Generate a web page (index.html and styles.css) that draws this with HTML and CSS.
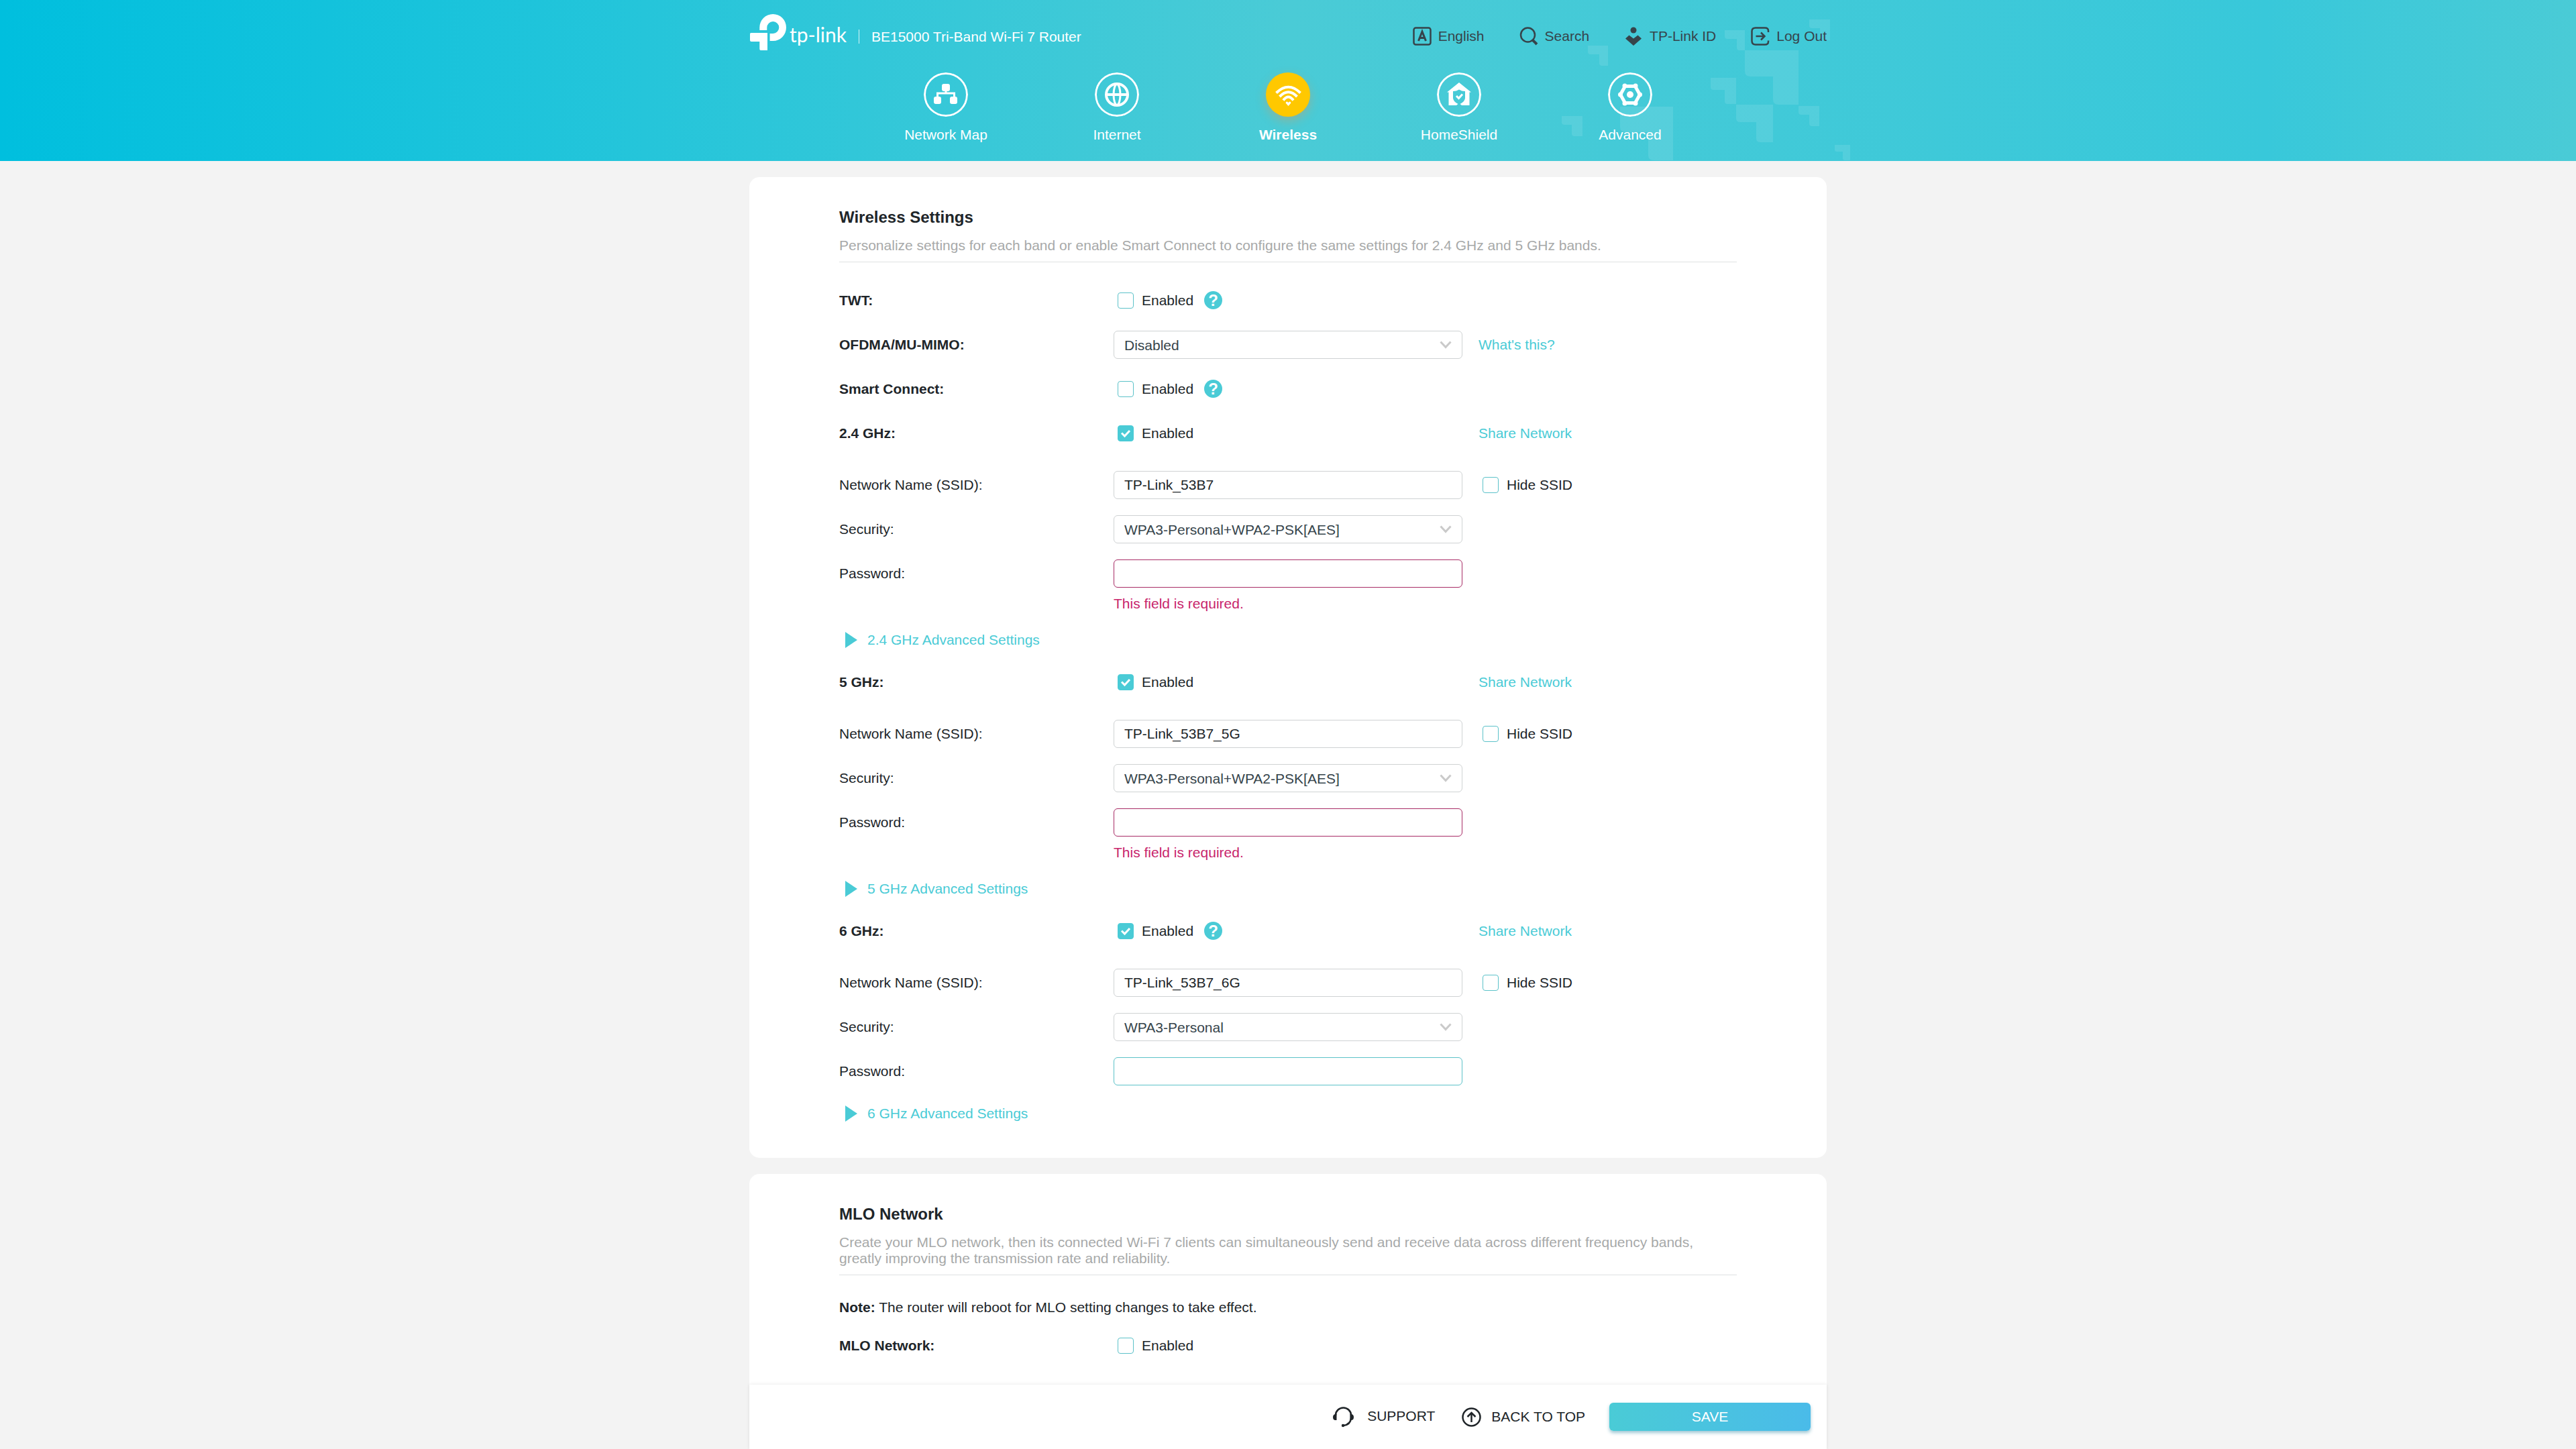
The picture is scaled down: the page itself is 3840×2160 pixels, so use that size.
FILE: index.html
```html
<!DOCTYPE html>
<html lang="en">
<head>
<meta charset="utf-8">
<meta name="viewport" content="width=device-width, initial-scale=1">
<title>BE15000 Tri-Band Wi-Fi 7 Router</title>
<link rel="stylesheet" href="styles.css">
</head>
<body>
<header class="header">
  <div class="container header-inner">
    <svg class="pattern" viewBox="0 0 430 240" aria-hidden="true">
      <path d="M39 68h30v30h-9q-4 0-4-4V81H43q-4 0-4-4z"/>
      <path d="M0 173h31v30h-12q-4 0-4-4v-13H4q-4 0-4-4z"/>
      <path d="M87 159h79v80h-29q-8 0-8-8v-34H95q-8 0-8-8z"/>
      <path d="M222 116h38v39h-13q-4 0-4-4v-17h-17q-4 0-4-4z"/>
      <path d="M243 45h30v30h-8q-4 0-4-4V58h-14q-4 0-4-4z"/>
      <path d="M273 75h80v81h-30q-8 0-8-8v-34h-34q-8 0-8-8z"/>
      <path d="M260 156h55v56h-19q-6 0-6-6v-24h-24q-6 0-6-6z"/>
      <path d="M353 158h31v30h-11q-4 0-4-4v-13h-12q-4 0-4-4z"/>
      <path d="M369 29h31v31h-11q-4 0-4-4V42h-12q-4 0-4-4z"/>
      <path d="M407 216h23v23h-8q-3 0-3-3v-10h-9q-3 0-3-3z"/>
    </svg>
    <div class="topbar">
      <div class="brand">
        <svg class="brand-mark" viewBox="0 0 54 54" aria-hidden="true">
          <path d="M14.300 24V20A20 20 0 0 1 34.300 0 19.700 20 0 0 1 54 20 19.700 20 0 0 1 34.300 40H29.600V29H34.300A9 9 0 1 0 25.300 20V24Z"/>
          <path d="M1.500 28H26V54H16Q14.300 54 14.300 52V41H2Q0 41 0 39V29.500Q0 28 1.500 28Z"/>
        </svg>
        <span class="brand-name">tp-link</span>
        <span class="brand-rule"></span>
        <span class="model">BE15000 Tri-Band Wi-Fi 7 Router</span>
      </div>
      <nav class="tools" aria-label="Account">
        <a class="tool" href="#language">
          <svg viewBox="0 0 28 28" aria-hidden="true"><rect x="1.500" y="1.500" width="25" height="25" rx="3" class="line"/><path d="M8.500 21 14 7 19.500 21M10 16.500H18" class="line mid"/></svg>
          English
        </a>
        <a class="tool" href="#search">
          <svg viewBox="0 0 28 28" aria-hidden="true"><circle cx="12.500" cy="12" r="10.500" class="line"/><path d="M19.500 19.500 26 26" class="line thick"/></svg>
          Search
        </a>
        <a class="tool" href="#id">
          <svg viewBox="0 0 28 28" aria-hidden="true"><circle cx="14" cy="5" r="4.500"/><path d="M7.500 12.500 14 17.500 20.500 12.500 26 17.500 14 28 2 17.500Z"/></svg>
          TP-Link ID
        </a>
        <a class="tool" href="#logout">
          <svg viewBox="0 0 28 28" aria-hidden="true"><path d="M26 8V6Q26 1.500 21 1.500H7Q1.500 1.500 1.500 6.500V21Q1.500 26.500 7 26.500H21Q26 26.500 26 22V20.500M7.500 14H20M15 8.500 20.500 14 15 19.500" class="line"/></svg>
          Log Out
        </a>
      </nav>
    </div>
    <nav class="tabs" aria-label="Main">
      <a class="tab" href="#map">
        <svg viewBox="0 0 66 66" aria-hidden="true"><circle cx="33" cy="33" r="31.500" class="ring"/><rect x="27" y="17" width="12" height="11" rx="3"/><rect x="15" y="36" width="11" height="11" rx="3"/><rect x="39" y="36" width="11" height="11" rx="3"/><path d="M33 27V31.500M20.500 38V31H45.500V38" class="ring"/></svg>
        <span>Network Map</span>
      </a>
      <a class="tab" href="#internet">
        <svg viewBox="0 0 66 66" aria-hidden="true"><circle cx="33" cy="33" r="31.500" class="ring"/><circle cx="33" cy="33" r="16" class="ring wide"/><ellipse cx="33" cy="33" rx="5" ry="15.500" class="ring"/><path d="M17 33H49" class="ring wide"/></svg>
        <span>Internet</span>
      </a>
      <a class="tab tab-active" href="#wireless" aria-current="page">
        <svg viewBox="0 0 66 66" aria-hidden="true"><path d="M15.500 30.500Q33.500 13 51.500 30.500M20.500 36Q33.500 22.500 46.500 36M26 41.500Q33.500 31.500 41 41.500" class="ring wide"/><path d="M33.500 50 29.500 45.500Q30.500 42 33.500 45 36.500 42 37.500 45.500Z"/></svg>
        <span>Wireless</span>
      </a>
      <a class="tab" href="#homeshield">
        <svg viewBox="0 0 66 66" aria-hidden="true"><circle cx="33" cy="33" r="31.500" class="ring"/><path d="M33 15 51 29.500H48.500V49H37L34.500 47Q42 43 42 38V28Q37 28 33 25.500 29 28 24 28V38Q24 43 31.500 47L29 49H17.500V29.500H15Z"/><path d="M29 35 32.500 38.500 38 32.500" class="ring"/></svg>
        <span>HomeShield</span>
      </a>
      <a class="tab" href="#advanced">
        <svg viewBox="0 0 66 66" aria-hidden="true"><circle cx="33" cy="33" r="31.500" class="ring"/><path d="M25.500 20.500H40.500L47.500 33 40.500 45.500H25.500L18.500 33Z" class="ring gear"/><g><circle cx="25" cy="20" r="3.500"/><circle cx="41" cy="20" r="3.500"/><circle cx="47.500" cy="33" r="3.500"/><circle cx="41" cy="46" r="3.500"/><circle cx="25" cy="46" r="3.500"/><circle cx="18.500" cy="33" r="3.500"/><circle cx="33" cy="33" r="5"/></g></svg>
        <span>Advanced</span>
      </a>
    </nav>
  </div>
</header>

<main class="container main">
  <section class="card">
    <h1 class="card-title">Wireless Settings</h1>
    <p class="card-desc">Personalize settings for each band or enable Smart Connect to configure the same settings for 2.4 GHz and 5 GHz bands.</p>
    <form class="form">
      <div class="group">
        <div class="row">
          <span class="label strong">TWT:</span>
          <div class="field"><label class="check"><input type="checkbox">Enabled</label><button type="button" class="help" aria-label="Help">?</button></div>
        </div>
        <div class="row">
          <label class="label strong" for="ofdma">OFDMA/MU-MIMO:</label>
          <div class="select"><select id="ofdma"><option>Disabled</option></select><svg viewBox="0 0 18 12" aria-hidden="true"><path d="M1.500 1.500 9 9.500 16.500 1.500"/></svg></div>
          <a class="link" href="#help">What's this?</a>
        </div>
        <div class="row">
          <span class="label strong">Smart Connect:</span>
          <div class="field"><label class="check"><input type="checkbox">Enabled</label><button type="button" class="help" aria-label="Help">?</button></div>
        </div>
        <div class="row">
          <span class="label strong">2.4 GHz:</span>
          <div class="field"><label class="check"><input type="checkbox" checked>Enabled</label></div>
          <a class="link" href="#share24">Share Network</a>
        </div>
      </div>
      <div class="group group-band">
        <div class="row">
          <label class="label" for="ssid24">Network Name (SSID):</label>
          <input class="input" id="ssid24" type="text" value="TP-Link_53B7">
          <label class="check check-side"><input type="checkbox">Hide SSID</label>
        </div>
        <div class="row">
          <label class="label" for="sec24">Security:</label>
          <div class="select"><select id="sec24"><option>WPA3-Personal+WPA2-PSK[AES]</option></select><svg viewBox="0 0 18 12" aria-hidden="true"><path d="M1.500 1.500 9 9.500 16.500 1.500"/></svg></div>
        </div>
        <div class="row">
          <label class="label" for="pw24">Password:</label>
          <input class="input input-error" id="pw24" type="password" aria-describedby="err24">
          <p class="error" id="err24">This field is required.</p>
        </div>
      </div>
      <button type="button" class="more"><svg viewBox="0 0 18 24" aria-hidden="true"><path d="M0 0 18 12 0 24Z"/></svg>2.4 GHz Advanced Settings</button>

      <div class="row">
        <span class="label strong">5 GHz:</span>
        <div class="field"><label class="check"><input type="checkbox" checked>Enabled</label></div>
        <a class="link" href="#share5">Share Network</a>
      </div>
      <div class="group group-band">
        <div class="row">
          <label class="label" for="ssid5">Network Name (SSID):</label>
          <input class="input" id="ssid5" type="text" value="TP-Link_53B7_5G">
          <label class="check check-side"><input type="checkbox">Hide SSID</label>
        </div>
        <div class="row">
          <label class="label" for="sec5">Security:</label>
          <div class="select"><select id="sec5"><option>WPA3-Personal+WPA2-PSK[AES]</option></select><svg viewBox="0 0 18 12" aria-hidden="true"><path d="M1.500 1.500 9 9.500 16.500 1.500"/></svg></div>
        </div>
        <div class="row">
          <label class="label" for="pw5">Password:</label>
          <input class="input input-error" id="pw5" type="password" aria-describedby="err5">
          <p class="error" id="err5">This field is required.</p>
        </div>
      </div>
      <button type="button" class="more"><svg viewBox="0 0 18 24" aria-hidden="true"><path d="M0 0 18 12 0 24Z"/></svg>5 GHz Advanced Settings</button>

      <div class="row">
        <span class="label strong">6 GHz:</span>
        <div class="field"><label class="check"><input type="checkbox" checked>Enabled</label><button type="button" class="help" aria-label="Help">?</button></div>
        <a class="link" href="#share6">Share Network</a>
      </div>
      <div class="group group-band">
        <div class="row">
          <label class="label" for="ssid6">Network Name (SSID):</label>
          <input class="input" id="ssid6" type="text" value="TP-Link_53B7_6G">
          <label class="check check-side"><input type="checkbox">Hide SSID</label>
        </div>
        <div class="row">
          <label class="label" for="sec6">Security:</label>
          <div class="select"><select id="sec6"><option>WPA3-Personal</option></select><svg viewBox="0 0 18 12" aria-hidden="true"><path d="M1.500 1.500 9 9.500 16.500 1.500"/></svg></div>
        </div>
        <div class="row">
          <label class="label" for="pw6">Password:</label>
          <input class="input input-active" id="pw6" type="password">
        </div>
      </div>
      <button type="button" class="more"><svg viewBox="0 0 18 24" aria-hidden="true"><path d="M0 0 18 12 0 24Z"/></svg>6 GHz Advanced Settings</button>
    </form>
  </section>

  <section class="card card-last">
    <h2 class="card-title">MLO Network</h2>
    <p class="card-desc">Create your MLO network, then its connected Wi-Fi 7 clients can simultaneously send and receive data across different frequency bands, greatly improving the transmission rate and reliability.</p>
    <form class="form">
      <p class="note"><strong>Note:</strong> The router will reboot for MLO setting changes to take effect.</p>
      <div class="row">
        <span class="label strong">MLO Network:</span>
        <div class="field"><label class="check"><input type="checkbox">Enabled</label></div>
      </div>
    </form>
  </section>

  <footer class="footer">
    <a class="foot-link foot-support" href="#support">
      <svg viewBox="0 0 31 31" aria-hidden="true"><path d="M4 13V12.500A11.500 11 0 0 1 27 12.500V17Q26 26.500 16 28" class="line"/><path d="M5.500 11V20H3Q0 19.500 0 15.500T3.500 11ZM25.500 11V20H28Q31 19.500 31 15.500T27.500 11Z"/><circle cx="15" cy="28" r="2.200"/></svg>
      <span>SUPPORT</span>
    </a>
    <a class="foot-link" href="#top">
      <svg viewBox="0 0 29 29" aria-hidden="true"><circle cx="14.500" cy="14.500" r="13" class="line"/><path d="M14.500 22V8.500M8.500 14 14.500 8 20.500 14" class="line"/></svg>
      BACK TO TOP
    </a>
    <button type="button" class="save">SAVE</button>
  </footer>
</main>
</body>
</html>
```

FILE: styles.css
```css
:root {
  --teal: #4acbd6;
  --teal-line: #5cc2c9;
  --ink: #202529;
  --slate: #36444b;
}

* {
  box-sizing: border-box;
}

body {
  margin: 0;
  min-height: 100vh;
  display: flex;
  flex-direction: column;
  background: #f3f3f3;
  color: var(--ink);
  font: 21px/24px "Liberation Sans", Arial, sans-serif;
}

h1, h2, p {
  margin: 0;
}

a {
  color: inherit;
  text-decoration: none;
}

button, input, select {
  margin: 0;
  font: inherit;
  color: inherit;
}

button {
  padding: 0;
  border: 0;
  background: none;
  cursor: pointer;
}

svg {
  display: block;
  flex: none;
}

.container {
  width: 100%;
  max-width: 1606px;
  margin: 0 auto;
}

/* Header */
.header {
  background: linear-gradient(90deg, #00bfde 0%, #4acbd6 50%, #38c8da 88%, #4acbd6 100%);
  color: #fff;
}

.header-inner {
  position: relative;
  padding: 21px 0 27px;
}

.pattern {
  position: absolute;
  top: 0;
  right: -35px;
  width: 430px;
  height: 240px;
  fill: rgba(255, 255, 255, 0.1);
}

.topbar {
  position: relative;
  display: flex;
  justify-content: space-between;
  align-items: flex-start;
}

.brand {
  display: flex;
  align-items: flex-start;
}

.brand-mark {
  width: 54px;
  height: 54px;
  margin-left: 1px;
  fill: #fff;
}

.brand-name {
  padding: 12px 0 0 5px;
  font: 30px/36px Lato, "Open Sans", sans-serif;
}

.brand-rule {
  width: 1px;
  height: 21px;
  margin: 23px 18px 0;
  background: rgba(255, 255, 255, 0.8);
}

.model {
  padding-top: 22px;
}

.tools {
  display: flex;
  gap: 52px;
  padding-top: 19px;
  color: var(--slate);
}

.tool {
  display: flex;
  align-items: center;
  gap: 10px;
  height: 28px;
}

.tool svg {
  width: 28px;
  height: 28px;
  fill: currentColor;
}

.line {
  fill: none;
  stroke: currentColor;
  stroke-width: 2.5;
}

.mid {
  stroke-width: 3;
}

.thick {
  stroke-width: 4;
}

.tabs {
  position: relative;
  display: flex;
  justify-content: center;
  margin-top: 33px;
}

.tab {
  width: 255px;
  display: flex;
  flex-direction: column;
  align-items: center;
  gap: 15px;
}

.tab svg {
  width: 66px;
  height: 66px;
  border-radius: 50%;
  fill: #fff;
}

.tab .ring {
  fill: none;
  stroke: #fff;
  stroke-width: 3;
}

.tab .wide {
  stroke-width: 4;
}

.tab .gear {
  stroke-width: 5;
}

.tab-active {
  font-weight: bold;
}

.tab-active svg {
  background: #ffc800;
  box-shadow: 0 6px 15px rgba(255, 140, 60, 0.35);
}

/* Cards */
.main {
  flex: 1;
  display: flex;
  flex-direction: column;
  padding-top: 24px;
}

.card {
  margin-bottom: 24px;
  padding: 45px 134px;
  border-radius: 15px;
  background: #fff;
}

.card-last {
  flex: 1;
  margin-bottom: 0;
  padding-bottom: 36px;
  border-radius: 15px 15px 0 0;
}

.card-title {
  font-size: 24px;
  line-height: 30px;
}

.card-desc {
  margin-top: 15px;
  padding-bottom: 12px;
  border-bottom: 1px solid #dfe1e2;
  color: #a7a9a9;
}

.form {
  display: flex;
  flex-direction: column;
  padding-top: 36px;
}

.group {
  display: flex;
  flex-direction: column;
  gap: 24px;
}

.group-band {
  margin-top: 35px;
}

.row {
  display: grid;
  grid-template-columns: 409px minmax(0, 520px) 1fr;
  align-items: center;
  grid-auto-rows: minmax(42px, auto);
}

.strong {
  font-weight: bold;
}

.field {
  display: flex;
  align-items: center;
  gap: 16px;
}

.check {
  display: flex;
  align-items: center;
  gap: 12px;
  padding-left: 6px;
}

.check-side {
  margin-left: 24px;
}

.check input {
  appearance: none;
  flex: none;
  width: 24px;
  height: 24px;
  border: 1px solid var(--teal-line);
  border-radius: 4px;
  background: #fff;
}

.check input:checked {
  border-color: var(--teal);
  background: var(--teal) url("data:image/svg+xml,%3Csvg xmlns='http://www.w3.org/2000/svg' viewBox='0 0 22 22'%3E%3Cpath d='M5 10.500 9.500 15 17 7' fill='none' stroke='white' stroke-width='3'/%3E%3C/svg%3E") center / 22px 22px no-repeat;
}

.help {
  width: 27px;
  height: 27px;
  margin-bottom: 2px;
  border-radius: 50%;
  background: var(--teal);
  color: #fff;
  font-size: 24px;
  font-weight: bold;
  line-height: 27px;
}

.select {
  display: grid;
  align-items: center;
}

.select > * {
  grid-area: 1 / 1;
}

.select svg {
  justify-self: end;
  width: 18px;
  height: 12px;
  margin-right: 16px;
  pointer-events: none;
  fill: none;
  stroke: #cacaca;
  stroke-width: 3;
}

.select select,
.input {
  width: 100%;
  height: 42px;
  padding: 0 15px;
  border: 1px solid #cfd2d3;
  border-radius: 6px;
  outline: 0;
  background: #fff;
}

.select select {
  appearance: none;
  padding-top: 1px;
  color: var(--slate);
}

.input-error {
  border-color: #a82c66;
}

.input-active {
  border-color: var(--teal-line);
}

.error {
  grid-column: 2;
  align-self: end;
  height: 36px;
  padding-top: 12px;
  color: #c8246b;
}

.row:has(.error) {
  grid-template-rows: 42px 36px;
}

.link {
  justify-self: start;
  margin-left: 24px;
  color: var(--teal);
}

.more {
  display: flex;
  align-items: center;
  align-self: flex-start;
  gap: 15px;
  height: 42px;
  margin: 21px 0;
  padding-left: 9px;
  color: var(--teal);
}

.more:last-child {
  margin-bottom: 0;
}

.more svg {
  width: 18px;
  height: 24px;
  fill: currentColor;
}

.note {
  margin-bottom: 24px;
}

/* Action bar */
.footer {
  position: sticky;
  bottom: 0;
  display: flex;
  align-items: center;
  justify-content: flex-end;
  height: 96px;
  padding-right: 24px;
  background: #fff;
  box-shadow: 0 0 5px rgba(0, 0, 0, 0.1);
}

.foot-link {
  display: flex;
  align-items: center;
  gap: 15px;
  margin-right: 36px;
}

.foot-link svg {
  width: 29px;
  height: 29px;
  fill: currentColor;
}

.foot-support {
  gap: 20px;
  margin-right: 40px;
}

.foot-support svg {
  width: 31px;
  height: 31px;
}

.foot-support span {
  padding-bottom: 3px;
}

.save {
  width: 300px;
  height: 42px;
  border-radius: 6px;
  background: linear-gradient(90deg, #4acbd6, #4abbe9);
  box-shadow: 0 3px 5px rgba(40, 130, 160, 0.45);
  color: #fff;
}
```
